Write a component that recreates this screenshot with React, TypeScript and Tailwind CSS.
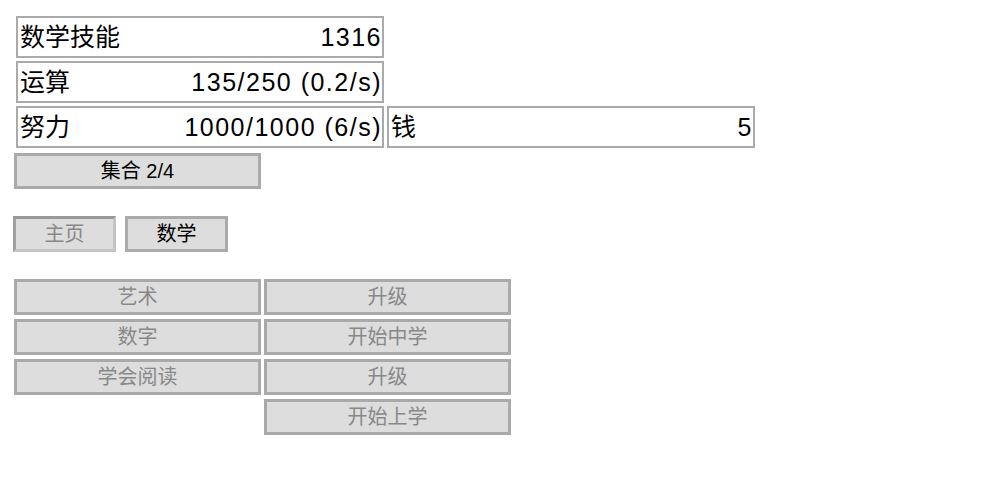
import React from "react";

const font = { fontFamily: '"Liberation Sans", "Noto Sans CJK SC", sans-serif' };

function Stat({ label, value, w = "w-[368px]" }: { label: string; value: string; w?: string }) {
  return (
    <div className={`${w} h-[42px] border-2 border-[#aaaaaa] bg-white flex items-center justify-between pl-[2px] pr-0 leading-none text-black`}>
      <span className="text-[25px]">{label}</span>
      <span className="text-[25px] tracking-[1.5px]">{value}</span>
    </div>
  );
}

function Btn({ label, w = "w-[247px]", disabled = true }: { label: string; w?: string; disabled?: boolean }) {
  return (
    <div
      className={`${w} h-[36px] border-[3px] border-[#aaaaaa] bg-[#dddddd] flex items-center justify-center text-[20px] leading-none ${
        disabled ? "text-[#888888]" : "text-black"
      }`}
    >
      {label}
    </div>
  );
}

export default function App() {
  return (
    <div className="w-[1000px] h-[501px] bg-white pl-[14px] pt-[16px]" style={font}>
      <div className="flex flex-col gap-[3px] pl-[2px]">
        <Stat label="数学技能" value="1316" />
        <Stat label="运算" value="135/250 (0.2/s)" />
        <div className="flex gap-[3px]">
          <Stat label="努力" value="1000/1000 (6/s)" />
          <Stat label="钱" value="5" />
        </div>
      </div>
      <div className="mt-[5px]">
        <div className="w-[247px] h-[36px] border-[3px] border-[#aaaaaa] bg-[#dddddd] flex items-center justify-center text-[20px] leading-none text-black">
          集合 2/4
        </div>
      </div>
      <div className="mt-[27px] flex gap-[9px] -ml-[1px]">
        <div className="w-[103px] h-[36px] border-[3px] border-t-[#999999] border-l-[#a0a0a0] border-r-[#c4c4c4] border-b-[#c4c4c4] bg-[#dddddd] flex items-center justify-center text-[20px] leading-none text-[#888888]">
          主页
        </div>
        <div className="w-[103px] h-[36px] border-[3px] border-[#aaaaaa] bg-[#dddddd] flex items-center justify-center text-[20px] leading-none text-black">
          数学
        </div>
      </div>
      <div className="mt-[27px] grid grid-cols-[247px_247px] gap-x-[3px] gap-y-[4px]">
        <Btn label="艺术" />
        <Btn label="升级" />
        <Btn label="数字" />
        <Btn label="开始中学" />
        <Btn label="学会阅读" />
        <Btn label="升级" />
        <div />
        <Btn label="开始上学" />
      </div>
    </div>
  );
}
